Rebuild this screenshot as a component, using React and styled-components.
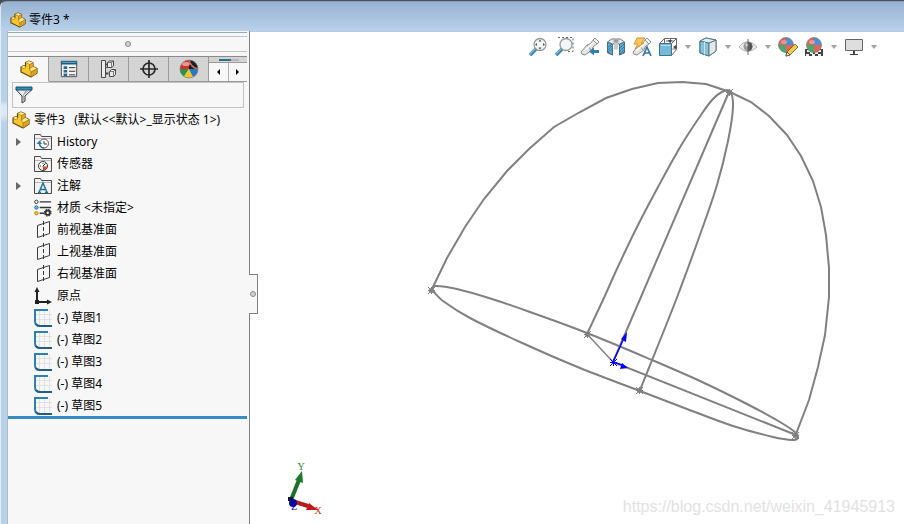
import React, { useState } from 'react';
import styled, { createGlobalStyle } from 'styled-components';

const GlobalStyle = createGlobalStyle`
  * {
    box-sizing: border-box;
  }
  body {
    margin: 0;
    background: #4a4f55;
    color: #000;
    font: 12px/22px "Noto Sans", "Noto Sans CJK SC", sans-serif;
  }
  button, input {
    font: inherit;
    padding: 0;
    border: 0;
    background: none;
  }
  svg {
    display: block;
    flex: none;
  }
`;

const Window = styled.div`
  min-height: 100vh;
  display: flex;
  flex-direction: column;
  border-top: 1px solid #4a4f55;
`;

const TitleBar = styled.header`
  height: 30px;
  display: flex;
  align-items: center;
  gap: 3px;
  padding: 6px 0 0 9px;
  border-top: 1px solid #8499b2;
  border-left: 1px solid #dbe8f6;
  border-top-left-radius: 6px;
  background: linear-gradient(#97b2d2, #b9d1ea);
`;

const Title = styled.h1`
  margin: 0;
  font-size: 12px;
  font-weight: normal;
`;

const Main = styled.div`
  flex: 1;
  display: flex;
  padding-left: 6px;
  border-left: 1px solid #e6eef8;
  background: linear-gradient(#b9d1ea 70px, #dbe8f6 74px, #dbe8f6 84px, #b9d1ea 92px);
`;

const Panel = styled.aside`
  position: relative;
  width: 243px;
  flex: none;
  padding-right: 2px;
  background: #f7f7f7;
  border-left: 1px solid #b4b8bd;
  border-right: 1px solid #808080;
`;

const PanelEdge = styled.div`
  height: 5px;
  padding-top: 1px;
  &::before {
    content: "";
    display: block;
    height: 1px;
    background: #8fadb5;
  }
`;

const Splitter = styled.div`
  height: 16px;
  margin-bottom: 4px;
  display: flex;
  align-items: center;
  justify-content: center;
  border-top: 1px solid #c3c3c3;
  border-bottom: 1px solid #c3c3c3;
`;

const Dot = styled.span`
  width: 6px;
  height: 6px;
  border: 1px solid #8c8c8c;
  border-radius: 50%;
  background: #d0d0d0;
`;

const Tabs = styled.div`
  display: flex;
  height: 26px;
  padding-left: 1px;
  border-top: 1px solid #8a8a8a;
`;

const Tab = styled.button`
  width: 40px;
  display: flex;
  align-items: center;
  justify-content: center;
  background: ${props => props.$active ? "#f7f7f7" : "#d4d4d4"};
  border-right: 1px solid #9a9a9a;
  border-bottom: 1px solid ${props => props.$active ? "#f7f7f7" : "#9a9a9a"};
`;

const TabOverflow = styled.div`
  flex: 1;
  background: #d4d4d4;
  display: flex;
  flex-direction: column;
`;

const HiddenTab = styled.div`
  height: 5px;
  padding: 2px 8px 0 10px;
  &::before {
    content: "";
    display: block;
    height: 2px;
    background: linear-gradient(90deg, #2f6d92 60%, #b9b9b9 60%);
  }
`;

const Arrows = styled.div`
  flex: 1;
  display: flex;
  border-top: 1px solid #9a9a9a;
  border-bottom: 1px solid #9a9a9a;
`;

const ArrowButton = styled.button`
  flex: 1;
  display: flex;
  align-items: center;
  justify-content: center;
  background: #f7f7f7;
  & + & {
    border-left: 1px solid #b0b0b0;
  }
`;

const Filter = styled.label`
  height: 26px;
  margin: 0 3px 0 4px;
  padding-left: 2px;
  display: flex;
  align-items: center;
  border: 1px solid #c3c3c3;
  > input {
    flex: 1;
    min-width: 0;
    height: 22px;
    outline: none;
  }
`;

const Tree = styled.ul`
  list-style: none;
  margin: 0;
  padding: 0;
  border-bottom: 3px solid #378bc3;
`;

const TreeRow = styled.li`
  height: 22px;
  display: flex;
  align-items: center;
  gap: ${props => props.$root ? "4px" : "5px"};
  padding: ${props => props.$root ? "2px 0 0 4px" : "2px 0 0 8px"};
  white-space: pre;
`;

const Expander = styled.button`
  width: 13px;
  height: 20px;
`;

const PanelHandle = styled.button`
  position: absolute;
  top: 243px;
  left: 100%;
  width: 9px;
  height: 40px;
  z-index: 1;
  display: flex;
  align-items: center;
  justify-content: center;
  background: #f7f7f7;
  border: 1px solid #808080;
  border-left: 0;
`;

const Viewport = styled.main`
  position: relative;
  flex: 1;
  min-width: 0;
  display: flex;
  flex-direction: column;
  justify-content: space-between;
  background: #fff;
  border-top: 1px solid #b3cbee;
`;

const Scene = styled.svg`
  position: absolute;
  inset: 0;
  width: 100%;
  height: 100%;
`;

const ViewToolbar = styled.div`
  position: relative;
  display: flex;
  justify-content: flex-end;
  gap: 6px;
  padding: 5px 26px 0 0;
`;

const ToolButton = styled.button`
  display: flex;
  align-items: center;
  gap: 6px;
`;

const Watermark = styled.div`
  position: relative;
  align-self: flex-end;
  padding: 0 9px 6px 0;
  color: #e2e2e2;
  font: 16px/22px "Liberation Sans", Arial, sans-serif;
`;

const PartIcon = ({ size = 18 }) => (
  <svg width={size} height={size} viewBox="0 0 18 18" strokeLinejoin="round">
    <path d="M1 7 4 5.500 5.500 6.500V2.500L9 1l4 1.700V6.500l4 2V13L11 17 1 12Z" fill="#f7c52c" stroke="#614711" strokeWidth="1.200" />
    <path d="M5.500 2.500 9 1l4 1.700-3.500 1.800Z" fill="#ffe78c" />
    <path d="M9.500 4.500 13 2.700V6.500L9.500 9Z" fill="#e0a823" />
    <path d="M1 7 4 5.500 5.500 6.500V8.500L3.500 8.500ZM9.500 9 13 6.500l4 2-6 3.500Z" fill="#ffe78c" />
    <path d="m11 12 6-3.500V13l-6 4Z" fill="#dba11e" />
    <path d="m5.500 2.500 4 2V9l1.500 3v5m-1.500-8L13 6.500m-2 5.500 6-3.500M9.500 4.500 13 2.700M1 7l2.500 1.500 2-.5V6.500" fill="none" stroke="#8a681a" strokeWidth=".6" />
  </svg>
);

const PropertyIcon = () => (
  <svg width="18" height="18" viewBox="0 0 20 20">
    <path d="M1.500 1.500h17v17h-17Z" fill="#f3f3f3" stroke="#444" />
    <path d="M1 1h18v4H1Z" fill="#1f5d83" />
    <path d="M2 2h16v1H2Z" fill="#73b6d5" />
    <path d="M4 7h4v3H4Zm0 4h4v3H4Zm0 4h4v3H4Z" fill="#256b94" />
    <path d="M10 8.500h7m-7 4h7m-7 4h7" stroke="#222" />
  </svg>
);

const ConfigIcon = () => (
  <svg width="18" height="20" viewBox="0 0 18 20" fill="#ececec" stroke="#4a4a4a">
    <path d="M2.500 1.500v17M2.500 8.500h5m-5 6h5" fill="none" />
    <path d="M1.500 1.500h4v17h-4Z" />
    <path d="M5.500 5.500h3m-3 9h3" fill="none" strokeWidth="2" />
    <path d="m7.500 3.500 2-1.500h4v5l-2 1.500h-4Zm2 9 2-2h4v5l-2 2h-4Z" />
    <path d="M7.500 3.500h4v5m0-5 2-1.500M9.500 12.500h4v5m0-5 2-2" fill="none" strokeWidth=".7" />
  </svg>
);

const TargetIcon = () => (
  <svg width="18" height="18" viewBox="0 0 18 18" fill="none" stroke="#282828" strokeWidth="1.700">
    <circle cx="9" cy="9" r="6" />
    <path d="M9 0v18M0 9h18" />
  </svg>
);

const Ball = ({ cx, cy, r }) => (
  <g>
    <path d={`M${cx} ${cy}V${cy - r}A${r} ${r} 0 0 0 ${cx - r} ${cy}Z`} fill="#e0605a" />
    <path d={`M${cx} ${cy}H${cx - r}A${r} ${r} 0 0 0 ${cx} ${cy + r}Z`} fill="#48a96a" />
    <path d={`M${cx} ${cy}V${cy - r}A${r} ${r} 0 0 1 ${cx + r} ${cy}Z`} fill="#4d8fd0" />
    <path d={`M${cx} ${cy}H${cx + r}A${r} ${r} 0 0 1 ${cx} ${cy + r}Z`} fill="#e2655a" />
    <ellipse cx={cx - 2} cy={cy - 3} rx="3" ry="2" fill="#fff" opacity=".35" />
    <circle cx={cx} cy={cy} r={r} fill="none" stroke="#777" strokeWidth=".7" />
  </g>
);

const DisplayIcon = () => (
  <svg width="20" height="20" viewBox="0 0 20 20">
    <circle cx="10" cy="10" r="9" fill="#d7d7d7" />
    <path d="M10 10V1a9 9 0 0 0-9 9Z" fill="#d92e25" />
    <path d="M10 10H1a9 9 0 0 0 4 7.500Z" fill="#289447" />
    <path d="m10 10-5 7.500a9 9 0 0 0 9 .6Z" fill="#efc62a" />
    <path d="m10 10 4 8.100A9 9 0 0 0 19 10Z" fill="#2678c4" />
    <path d="M10 10V1c5 0 9 4 9 9Z" fill="#1e1e1e" />
    <path d="M10 1c1 4 4 8 9 9" fill="none" stroke="#c96c55" strokeWidth="1.500" />
    <ellipse cx="7" cy="5" rx="4" ry="2" fill="#fff" opacity=".5" />
    <circle cx="10" cy="10" r="9" fill="none" stroke="#777" strokeWidth=".7" />
  </svg>
);

const FunnelIcon = () => (
  <svg width="18" height="18" viewBox="0 0 18 18">
    <path d="M1 3.500 7 10v7l3-2v-5l7-6.500Z" fill="#eee" stroke="#333" />
    <path d="M8 9v6l1-1V9l4-4h-3Z" fill="#aaa" />
    <path d="M1 1h16v3H1Z" fill="#348cb5" stroke="#17516f" />
  </svg>
);

const Folder = ({ children }) => (
  <svg width="18" height="18" viewBox="0 0 18 18">
    <path d="M.5 16.500v-15h6l1 2h10v13Z" fill="#f2f2f2" stroke="#4a4a4a" />
    <path d="M1 5.500h16" stroke="#b8b8b8" />
    {children}
  </svg>
);

const HistoryIcon = () => (
  <Folder>
    <circle cx="10" cy="10.500" r="4.500" fill="#fff" stroke="#555" />
    <path d="M10 8v3h3" fill="none" stroke="#333" />
    <path d="M10 15a4.500 4.500 0 0 1-4.500-5" fill="none" stroke="#2879a8" strokeWidth="1.500" />
    <path d="m2.500 11 3-3.500 2.500 3.500Z" fill="#2879a8" />
  </Folder>
);

const SensorIcon = () => (
  <Folder>
    <circle cx="9" cy="11" r="4.500" fill="#fff" stroke="#333" />
    <path d="m8.500 11.500 3-3" stroke="#222" />
    <path d="M9 11.500h4a4 4 0 0 1-4 3.500Z" fill="#df4328" />
    <path d="M6 11h1m2-3v1" stroke="#333" />
  </Folder>
);

const NoteIcon = () => (
  <Folder>
    <path d="M5 15.500 9 6l4 9.500M6.500 12.500H12M4 15.500h3m4 0h3" fill="none" stroke="#25729d" strokeWidth="1.500" />
  </Folder>
);

const MaterialIcon = () => (
  <svg width="18" height="18" viewBox="0 0 19 18" stroke="#333">
    <path d="M6 2.500h12M6 8.500h12M6 14.500h5" strokeWidth="1.500" />
    <circle cx="2.500" cy="2.500" r="1.800" fill="#fff" />
    <circle cx="2.500" cy="8.500" r="1.800" fill="#62b5e0" stroke="#25729d" />
    <circle cx="2.500" cy="14.500" r="1.800" fill="#ffc51f" stroke="#b98513" />
    <circle cx="14.500" cy="14" r="2.300" fill="#f7f7f7" strokeWidth="2" />
    <circle cx="14.500" cy="14" r="3.500" fill="none" strokeWidth="1.200" strokeDasharray="1.500 1.250" />
  </svg>
);

const PlaneIcon = () => (
  <svg width="18" height="20" viewBox="0 0 18 20" fill="none" stroke="#3a3a3a">
    <path d="m3.500 5.500 12-4v12l-12 4Z" />
    <path d="M9.500 1v18" strokeDasharray="4 2" />
  </svg>
);

const OriginIcon = () => (
  <svg width="18" height="18" viewBox="0 0 18 18" fill="#222">
    <path d="M2 3h2v11h10v2H2Z" />
    <path d="m3 0 2.500 5H.5Zm15 15-5 2.500v-5Z" />
    <path d="M1 13h4v4H1Z" />
  </svg>
);

const SketchIcon = () => (
  <svg width="18" height="18" viewBox="0 0 18 18" fill="none">
    <path d="M5.500 2v14m5-15v15m5-15v14M2 5.500h16m-16 5h16" stroke="#e1e1e1" />
    <path d="M14 1H1v11q0 5 5 5" stroke="#2b82ad" strokeWidth="2" />
    <path d="M2 15q1.500 2 4 2h12" stroke="#235d82" strokeWidth="2" />
  </svg>
);

const Tool = ({ children }) => (
  <svg width="20" height="20" viewBox="0 0 20 20">{children}</svg>
);

const Magnifier = () => (
  <g>
    <path d="m2 18 6-6" stroke="#397fa8" strokeWidth="3.500" />
    <path d="m2 17 5-5" stroke="#81bbda" strokeWidth="1.500" />
    <circle cx="12" cy="7.500" r="6" fill="#f3f5f6" stroke="#9a9a9a" strokeWidth="1.300" />
  </g>
);

const Spyglass = () => (
  <g stroke="#8c8c8c" strokeLinejoin="round">
    <path d="M1 15 7 8l3-1 4-5 4 4-5 4-1 3-7 5q-4 0-4-3Z" fill="#e4e4e4" />
    <path d="m13 3 2-2 4 4-2 2Z" fill="#f7f7f7" />
    <path d="m7 8 4 5" fill="none" />
    <path d="m4 14 10-9" fill="none" stroke="#fff" strokeWidth="1.500" />
  </g>
);

const FitIcon = () => (
  <Tool>
    <Magnifier />
    <path d="m12 2.500 1.500 2h-3Zm0 10 1.500-2h-3ZM7 7.500 9 6v3Zm10 0L15 6v3Z" fill="#555" />
  </Tool>
);

const ZoomAreaIcon = () => (
  <Tool>
    <Magnifier />
    <path d="M4 .5h15v14h-6" fill="none" stroke="#666" strokeDasharray="2 2" />
  </Tool>
);

const PreviousViewIcon = () => (
  <Tool>
    <Spyglass />
    <path d="m9 14.500 5-4v2.500h5v3h-5v2.500Z" fill="#357fa9" />
  </Tool>
);

const SectionIcon = () => (
  <Tool>
    <path d="m1.500 5 4-3h9l4 3v11l-5 2V8L12 6H8L6.500 8v10l-5-2Z" fill="#e6e6e6" stroke="#777" />
    <path d="m1.500 5 5 2v11l-5-3Zm12 2 5-2v10l-5 3Z" fill="#62a8c9" stroke="#3a7490" />
    <path d="m2 10 4-3m-4 6 4-4m-4 6 4-3m8-1 4-4m-4 7 4-4m-4 7 4-4" stroke="#286a8d" strokeWidth=".7" />
    <path d="M8 6h4v6q-2 1-4 0Z" fill="#c9c9c9" />
    <ellipse cx="10" cy="4" rx="3" ry="1" fill="#999" />
  </Tool>
);

const AnnotationViewIcon = () => (
  <Tool>
    <Spyglass />
    <path d="M5 1h8l-4 5h3l-9 6 3-5H2Z" fill="#fbc957" stroke="#d58f35" />
    <path d="m11 19 4-9 4 9m-7-3h6" fill="none" stroke="#34799f" strokeWidth="1.700" />
  </Tool>
);

const OrientationIcon = () => (
  <Tool>
    <path d="M1.500 6.500 6.500 1.500h12v11l-5 6m0-12 5-5M6.500 2v4m6-4v4m2 6h4M8 4h8" fill="none" stroke="#666" />
    <path d="M1.500 6.500h12v12h-12Z" fill="#78b9d7" stroke="#397492" />
    <path d="M3 8h9v1H3Z" fill="#b7dceb" />
    <path d="m10 3 2 3 2-3Zm8 5-3 2 3 2Z" fill="#444" />
  </Tool>
);

const CubeIcon = () => (
  <Tool>
    <path d="m2 4 6-3 10 2v11l-7 5-9-3Z" fill="#8fc7df" stroke="#4d7483" />
    <path d="m2 4 9 2v13l-9-3Z" fill="#83c1dc" stroke="#4d7483" />
    <path d="m11 6 7-3v11l-7 5Z" fill="#e2e8ea" stroke="#5d777f" />
    <path d="m2 4 6-3 10 2-7 3Z" fill="#dceff6" stroke="#5d777f" />
    <path d="M6.500 5v12.500" stroke="#c7e4ef" />
  </Tool>
);

const EyeIcon = () => (
  <Tool>
    <path d="M1 10q8-11 18 0-9 9-18 0Z" fill="#ececec" stroke="#b0b0b0" />
    <circle cx="10" cy="9.500" r="4.500" fill="#9a9a9a" />
    <path d="M10 5a4.500 4.500 0 0 1 0 9Z" fill="#555" />
    <circle cx="9" cy="8" r="1.500" fill="#ddd" />
    <path d="M10 2v16" stroke="#666" />
  </Tool>
);

const AppearanceIcon = () => (
  <Tool>
    <Ball cx={8} cy={8} r={7.5} />
    <path d="m8 19 1-4 8-8 3 3-8 8Z" fill="#f4cb4a" stroke="#624e2b" strokeWidth=".8" />
    <path d="m8 19 1-4 3 3Z" fill="#fff0c9" stroke="#444" strokeWidth=".8" />
  </Tool>
);

const SceneIcon = () => (
  <Tool>
    <path d="M1 12h18v7H1Z" fill="#444" />
    <path d="M3 13h3v2H3Zm11 0h3v2h-3ZM2 17h3v2H2Zm6 0h3v2H8Zm6 0h3v2h-3ZM6 15h3v2H6Zm5 0h3v2h-3Z" fill="#eee" />
    <Ball cx={10} cy={8} r={7.5} />
  </Tool>
);

const MonitorIcon = () => (
  <Tool>
    <path d="M1.500 2.500h17v11h-17Z" fill="#dedede" stroke="#666" />
    <path d="M9 14h2v3H9Zm-3 3h8v1H6Z" fill="#444" />
  </Tool>
);

const DropArrow = () => (
  <svg width="8" height="4" viewBox="0 0 8 4">
    <path d="M1 0h6L4 4Z" fill="#a0a0a0" />
  </svg>
);

const Triangle = ({ left }) => (
  <svg width="5" height="8" viewBox="0 0 5 8">
    <path d={left ? "M4 1v6L1 4Z" : "M1 1v6l3-3Z"} fill="#000" />
  </svg>
);

const treeItems = [
  { label: 'History', icon: <HistoryIcon />, expandable: true },
  { label: '传感器', icon: <SensorIcon /> },
  { label: '注解', icon: <NoteIcon />, expandable: true },
  { label: '材质 <未指定>', icon: <MaterialIcon /> },
  { label: '前视基准面', icon: <PlaneIcon /> },
  { label: '上视基准面', icon: <PlaneIcon /> },
  { label: '右视基准面', icon: <PlaneIcon /> },
  { label: '原点', icon: <OriginIcon /> },
  { label: '(-) 草图1', icon: <SketchIcon /> },
  { label: '(-) 草图2', icon: <SketchIcon /> },
  { label: '(-) 草图3', icon: <SketchIcon /> },
  { label: '(-) 草图4', icon: <SketchIcon /> },
  { label: '(-) 草图5', icon: <SketchIcon /> },
];

const tabs = [
  { name: 'Features', icon: <PartIcon /> },
  { name: 'Properties', icon: <PropertyIcon /> },
  { name: 'Configurations', icon: <ConfigIcon /> },
  { name: 'Dimensions', icon: <TargetIcon /> },
  { name: 'Display', icon: <DisplayIcon /> },
];

const tools = [
  { name: 'Zoom to fit', icon: <FitIcon /> },
  { name: 'Zoom to area', icon: <ZoomAreaIcon /> },
  { name: 'Previous view', icon: <PreviousViewIcon /> },
  { name: 'Section view', icon: <SectionIcon /> },
  { name: 'Annotation views', icon: <AnnotationViewIcon /> },
  { name: 'View orientation', icon: <OrientationIcon />, menu: true },
  { name: 'Display style', icon: <CubeIcon />, menu: true },
  { name: 'Hide or show', icon: <EyeIcon />, menu: true },
  { name: 'Edit appearance', icon: <AppearanceIcon /> },
  { name: 'Apply scene', icon: <SceneIcon />, menu: true },
  { name: 'View settings', icon: <MonitorIcon />, menu: true },
];

// sketch curves, in window coordinates
const dome = [[432, 289], [447, 258], [465, 227], [484, 199], [507, 171], [529, 149], [554, 127], [580, 112], [606, 98], [632, 89], [658, 83], [682, 82], [706, 84], [730, 92], [751, 102], [769, 116], [787, 135], [801, 156], [813, 181], [821, 207], [826, 235], [829, 268], [829, 297], [825, 335], [818, 367], [809, 400], [796, 434]];
const loop = [[587, 334], [603, 300], [616, 271], [636, 229], [658, 187], [682, 144], [703, 112], [713, 99], [722, 92], [730, 91], [733, 107], [728, 141], [717, 185], [701, 232], [676, 300], [640, 390]];
const base = [[432, 290], [435, 286], [457, 289], [492, 299], [530, 312], [587, 333], [652, 360], [700, 381], [747, 404], [780, 422], [796, 433], [798, 438], [793, 440], [773, 437], [733, 426], [687, 409], [640, 391], [580, 368], [520, 342], [470, 318], [443, 301], [432, 290]];
const marks = [[729, 92], [431, 290], [587, 334], [639, 390], [795, 435]];

const smooth = (pts) => {
  let d = `M${pts[0].join(' ')}`;
  for (let i = 0; i < pts.length - 1; i++) {
    const a = pts[i - 1] || pts[i];
    const b = pts[i];
    const c = pts[i + 1];
    const e = pts[i + 2] || c;
    // short handles next to a short span keep the tips from bulging
    const len = Math.hypot(c[0] - b[0], c[1] - b[1]);
    const k1 = len / (len + Math.hypot(b[0] - a[0], b[1] - a[1])) / 3;
    const k2 = len / (len + Math.hypot(e[0] - c[0], e[1] - c[1])) / 3;
    d += `C${b[0] + (c[0] - a[0]) * k1} ${b[1] + (c[1] - a[1]) * k1} ${c[0] - (e[0] - b[0]) * k2} ${c[1] - (e[1] - b[1]) * k2} ${c[0]} ${c[1]}`;
  }
  return d;
}

const Mark = ({ x, y }) => (
  <path d={`M${x - 3} ${y + .5}h7M${x + .5} ${y - 3}v7M${x - 3} ${y - 3}l7 7m0-7l-7 7`} strokeWidth="1" />
);

const Sketch = () => (
  <Scene viewBox="250 32 654 492">
    <g fill="none" stroke="#808080" strokeWidth="2">
      <polyline points={dome.join(' ')} />
      <path d={smooth(loop)} />
      <path d={smooth(base)} />
      <path d="M729 92 613 362 796 435" />
      <path d="m587 334 26 28" strokeWidth="1.500" />
      {marks.map(([x, y]) => (
        <g key={x}>
          <Mark x={x} y={y} />
          <circle cx={x + .5} cy={y + .5} r="2.500" fill="#808080" stroke="none" />
        </g>
      ))}
    </g>
    <g fill="#0000ff" stroke="#0000ff">
      <path d="m613 362 11-24m-11 24 9 3" strokeWidth="1.500" />
      <path d="m627 332-1 10-5-3Zm1 36-8 1 2-6Z" stroke="none" />
      <Mark x={613} y={362} />
    </g>
    <path d="m291 500 8-20" stroke="#1d6f25" strokeWidth="4" />
    <path d="m302 471 1 12-8-3Z" fill="#1b7a25" />
    <path d="m292 501 16 5" stroke="#b51d1d" strokeWidth="4" />
    <path d="m318 510-12 0 3-7Z" fill="#c01818" />
    <path d="M288 497h5v4h-5Z" fill="#151536" />
    <circle cx="293" cy="503" r="4" fill="#0c0c90" />
    <g fontFamily="Liberation Serif, serif" fontSize="10" textAnchor="middle">
      <text x="301" y="470" fill="#0a8a14">Y</text>
      <text x="318" y="514" fill="#e01818">X</text>
      <text x="294" y="510" fill="#0000e0">Z</text>
    </g>
  </Scene>
);

const App = () => {
  const [activeTab, setActiveTab] = useState('Features');
  const [filter, setFilter] = useState('');

  return (
    <Window>
      <GlobalStyle />
      <TitleBar>
        <PartIcon size={16} />
        <Title>零件3 *</Title>
      </TitleBar>
      <Main>
        <Panel>
          <PanelEdge />
          <Splitter><Dot /></Splitter>
          <Tabs>
            {tabs.map(tab => (
              <Tab key={tab.name} aria-label={tab.name} $active={tab.name === activeTab} onClick={() => setActiveTab(tab.name)}>
                {tab.icon}
              </Tab>
            ))}
            <TabOverflow>
              <HiddenTab />
              <Arrows>
                <ArrowButton aria-label="Previous tabs"><Triangle left /></ArrowButton>
                <ArrowButton aria-label="Next tabs"><Triangle /></ArrowButton>
              </Arrows>
            </TabOverflow>
          </Tabs>
          <Filter>
            <FunnelIcon />
            <input aria-label="Filter" value={filter} onChange={(e) => setFilter(e.target.value)} />
          </Filter>
          <Tree>
            <TreeRow $root>
              <PartIcon />
              <span>零件3   (默认&lt;&lt;默认&gt;_显示状态 1&gt;)</span>
            </TreeRow>
            {treeItems.filter(item => item.label.includes(filter)).map(item => (
              <TreeRow key={item.label}>
                {item.expandable ? (
                  <Expander aria-label={`Expand ${item.label}`}>
                    <svg width="5" height="8" viewBox="0 0 5 8">
                      <path d="M0 0v8l5-4Z" fill="#666" />
                    </svg>
                  </Expander>
                ) : <Expander as="span" />}
                {item.icon}
                <span>{item.label}</span>
              </TreeRow>
            ))}
          </Tree>
          <PanelHandle aria-label="Collapse panel"><Dot /></PanelHandle>
        </Panel>
        <Viewport>
          <Sketch />
          <ViewToolbar>
            {tools.map(tool => (
              <ToolButton key={tool.name} aria-label={tool.name}>
                {tool.icon}
                {tool.menu && <DropArrow />}
              </ToolButton>
            ))}
          </ViewToolbar>
          <Watermark>https://blog.csdn.net/weixin_41945913</Watermark>
        </Viewport>
      </Main>
    </Window>
  );
}

export default App;
